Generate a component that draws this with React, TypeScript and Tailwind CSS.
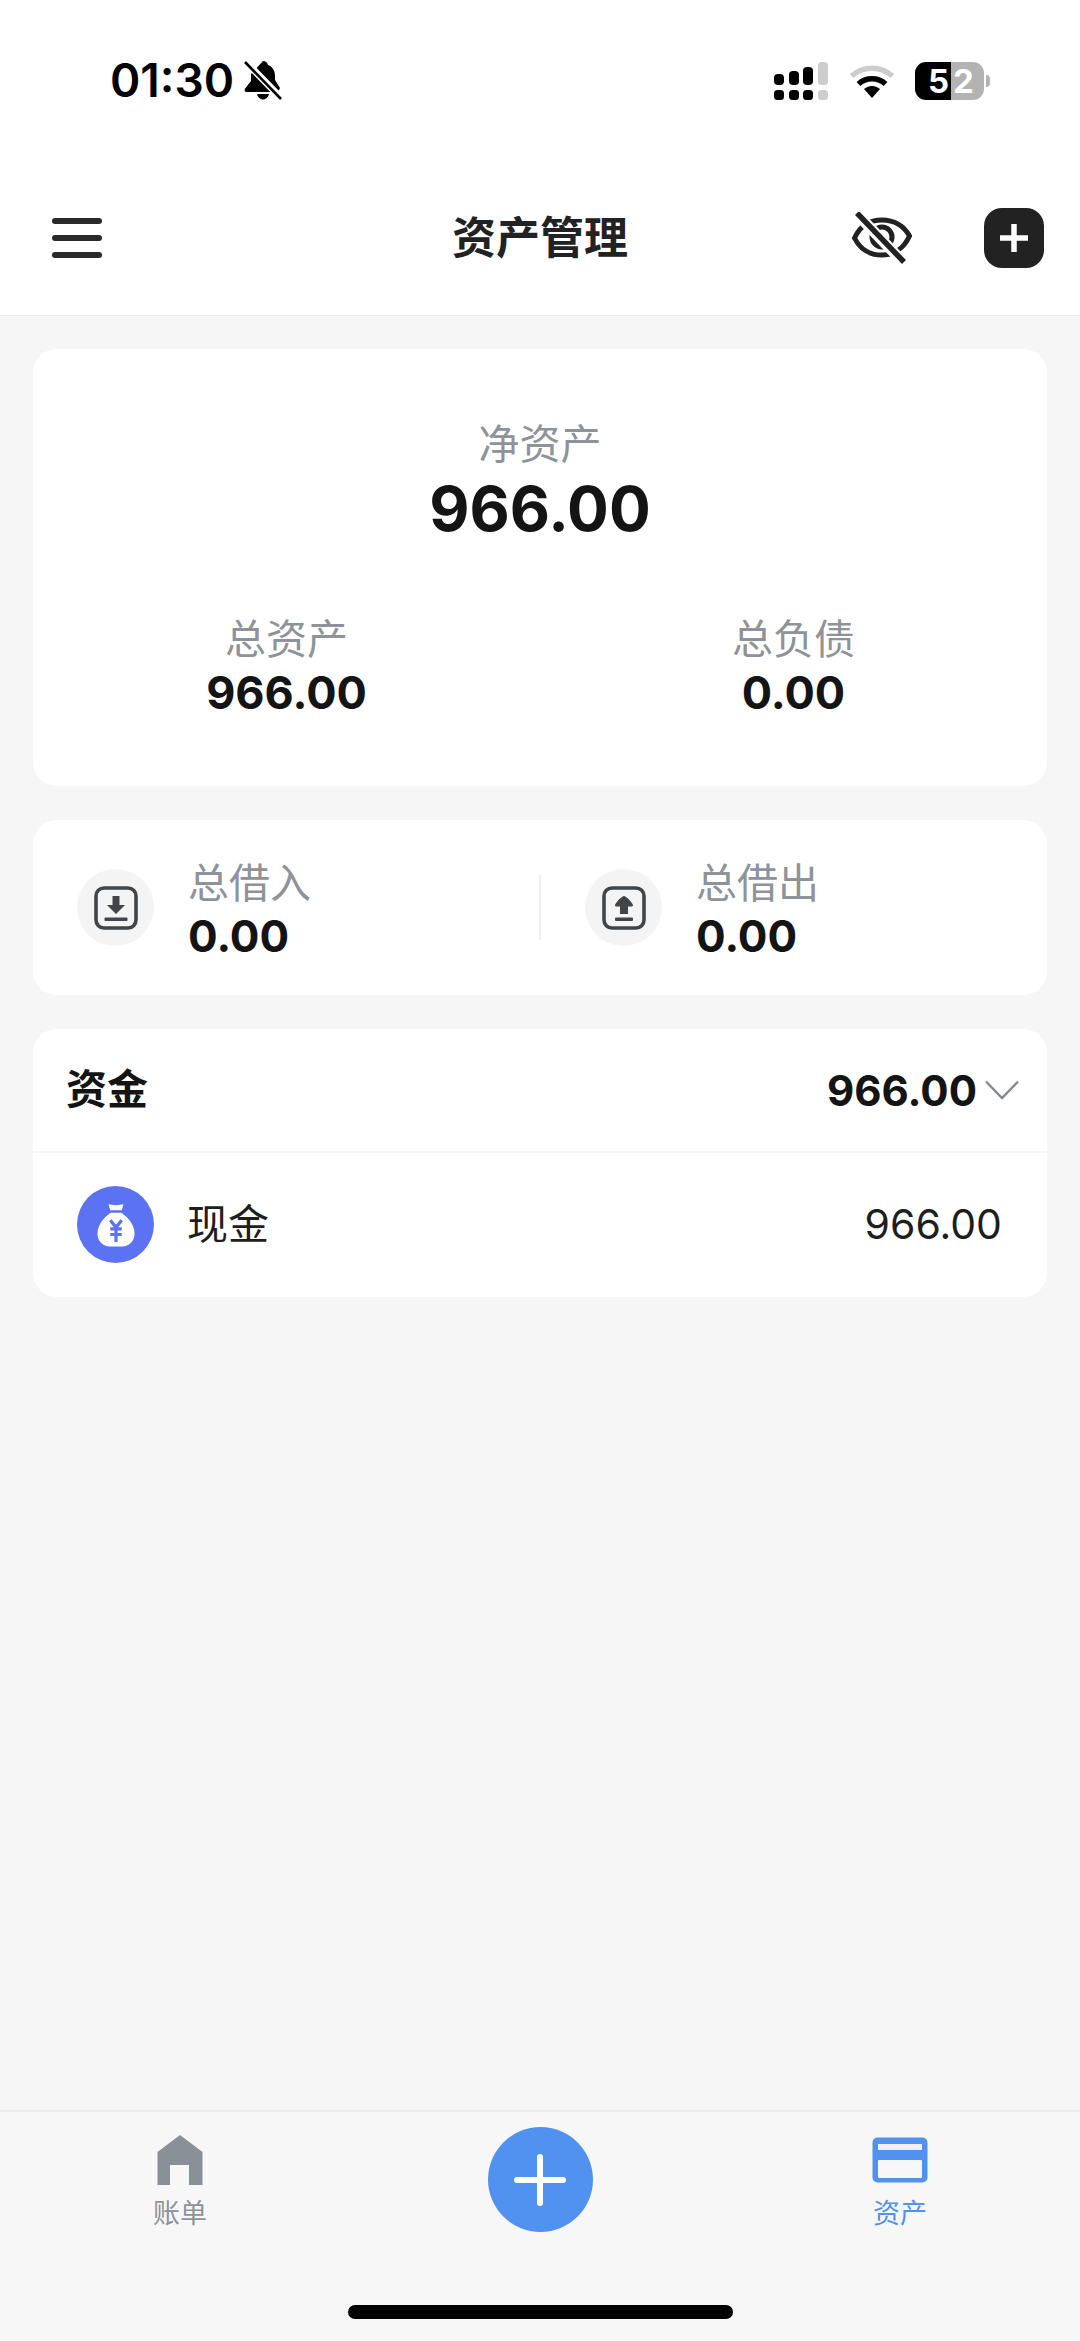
const font = { fontFamily: 'Inter, "Noto Sans CJK SC", sans-serif' };

function SignalIcon() {
  return (
    <svg width="54" height="38" viewBox="0 0 54 38" fill="#000">
      <rect x="0" y="12" width="10" height="11" rx="4" />
      <rect x="15" y="9" width="10" height="14" rx="4" />
      <rect x="29" y="5" width="10" height="18" rx="4" />
      <rect x="44" y="0" width="10" height="23" rx="3.5" fill="#cdcdcd" />
      <rect x="0" y="28" width="10" height="10" rx="3.5" />
      <rect x="15" y="28" width="10" height="10" rx="3.5" />
      <rect x="29" y="28" width="10" height="10" rx="3.5" />
      <rect x="44" y="28" width="10" height="10" rx="3.5" fill="#cdcdcd" />
    </svg>
  );
}

function WifiIcon() {
  return (
    <svg width="46" height="34" viewBox="0 0 46 34" fill="none">
      <path d="M2.5 12 C14 1.5 32 1.5 43.5 12" stroke="#cdcdcd" strokeWidth="5.5" />
      <path d="M9.5 20 C17 13 29 13 36.5 20" stroke="#000" strokeWidth="5.5" />
      <path d="M15 25 C20 21 26 21 31 25 L23 34 Z" fill="#000" />
    </svg>
  );
}

function BellOffIcon() {
  return (
    <svg width="38" height="40" viewBox="0 0 38 40" fill="#000">
      <path d="M19 1 C22 1 23.5 3 24 5 C29 7 31 11 31 16 L31 20 L36 28 L34 32 L3 32 C0.5 32 0 30 1.5 28 L7 21 L7 14 Z" />
      <path d="M13 34 L25 34 C24 38 21 39.5 19 39.5 C17 39.5 14 38 13 34 Z" />
      <path d="M3 3 L37 38" stroke="#fff" strokeWidth="7" />
      <path d="M1 2 L37 39" stroke="#000" strokeWidth="2.6" />
    </svg>
  );
}

function EyeOffIcon() {
  return (
    <svg width="60" height="52" viewBox="0 0 60 52" fill="none" stroke="#222" strokeWidth="5">
      <path d="M2.5 26 C8 14 18 8 30 8 C42 8 52 14 57.5 24 C52 36 42 43 30 43 C18 43 8 37 2.5 26 Z" />
      <circle cx="30" cy="25" r="10" />
      <path d="M5 2 L51 50" stroke="#fff" strokeWidth="11" />
      <path d="M5 1 L52 50" strokeWidth="5.5" />
    </svg>
  );
}

function DownloadBoxIcon() {
  return (
    <svg width="44" height="44" viewBox="0 0 44 44" fill="none">
      <rect x="2" y="2" width="40" height="40" rx="8" stroke="#424548" strokeWidth="3.6" />
      <path d="M18.5 10 H25.5 V19 H31 L22 28 L13 19 H18.5 Z" fill="#424548" />
      <rect x="10.5" y="31.5" width="23" height="3.4" rx="1" fill="#424548" />
    </svg>
  );
}

function UploadBoxIcon() {
  return (
    <svg width="44" height="44" viewBox="0 0 44 44" fill="none">
      <rect x="2" y="2" width="40" height="40" rx="8" stroke="#424548" strokeWidth="3.6" />
      <path d="M22 10 C24 10 31 17 31 19.5 C31 20.5 30 20.5 26 20.5 V28 H18 V20.5 C14 20.5 13 20.5 13 19.5 C13 17 20 10 22 10 Z" fill="#424548" />
      <rect x="13" y="31.5" width="18" height="3.4" rx="1" fill="#424548" />
    </svg>
  );
}

function MoneyBagIcon() {
  return (
    <svg width="38" height="44" viewBox="0 0 40 46">
      <path d="M12 1 C16 2.5 24 2.5 28 1 L26 7.5 L14 7.5 Z" fill="#fff" />
      <path d="M14.5 10 H25.5 C33 15 39.5 23 39.5 32 C39.5 41 33 45.5 27 45.5 H13 C7 45.5 0.5 41 0.5 32 C0.5 23 7 15 14.5 10 Z" fill="#fff" />
      <path d="M14 18 L20 25.5 L26 18 M14 27 H26 M14 33 H26 M20 25 V41" fill="none" stroke="#5b73f2" strokeWidth="3.4" />
    </svg>
  );
}

function HomeIcon() {
  return (
    <svg width="46" height="50" viewBox="0 0 46 50" fill="#8a9098">
      <path d="M23 0 L45.5 17 V50 H32 V30 H13 V50 H0.5 V17 Z" />
    </svg>
  );
}

function CardIcon() {
  return (
    <svg width="56" height="46" viewBox="0 0 56 46">
      <rect x="0.5" y="0.5" width="55" height="45" rx="5" fill="#5191f0" />
      <rect x="6" y="7" width="44" height="6" fill="#eef1f6" />
      <rect x="6" y="23" width="44" height="18" rx="1" fill="#f7f7f8" />
    </svg>
  );
}

function Stat({ label, value }: { label: string; value: string }) {
  return (
    <div className="flex flex-col items-center">
      <span className="text-[41px] leading-[48px] text-[#8e9299]">{label}</span>
      <span className="mt-[5px] text-[45px] leading-[50px] font-bold text-[#141414]">{value}</span>
    </div>
  );
}

function Loan({ label, icon }: { label: string; icon: React.ReactNode }) {
  return (
    <div className="flex flex-1 items-center pl-[44px]">
      <div className="flex h-[77px] w-[77px] items-center justify-center rounded-full bg-[#f4f4f5]">{icon}</div>
      <div className="ml-[34px] flex flex-col pt-[4px]">
        <span className="text-[41px] leading-[48px] text-[#8e9299]">{label}</span>
        <span className="mt-[4px] text-[44px] leading-[50px] font-bold text-[#141414]">0.00</span>
      </div>
    </div>
  );
}

export default function App() {
  return (
    <div style={font} className="flex h-[2341px] w-[1080px] flex-col overflow-hidden bg-[#f6f6f7]">
      <header className="h-[316px] shrink-0 border-b border-[#ececee] bg-white">
        <div className="flex h-[160px] items-start justify-between pt-[57px] pr-[90px] pl-[110px]">
          <div className="flex items-center gap-[10px]">
            <span className="text-[46px] leading-[46px] font-semibold text-black">01:30</span>
            <BellOffIcon />
          </div>
          <div className="flex items-center pt-[5px]">
            <SignalIcon />
            <div className="ml-[21px]"><WifiIcon /></div>
            <div className="ml-[20px] flex items-center">
              <div className="flex h-[38px] w-[69px] overflow-hidden rounded-[11px] text-[33px] leading-[38px] font-bold text-white">
                <div className="flex w-[36px] justify-end bg-black pr-[2px]">5</div>
                <div className="flex w-[33px] justify-start bg-[#b3b3b3] pl-[2px]">2</div>
              </div>
              <div className="ml-[2px] h-[12px] w-[4px] rounded-r-full bg-[#b3b3b3]" />
            </div>
          </div>
        </div>
        <div className="flex h-[155px] items-center px-[36px]">
          <div className="flex flex-1 flex-col gap-[11px]">
            <span className="ml-[16px] h-[6px] w-[50px] rounded-full bg-[#2a2a2a]" />
            <span className="ml-[16px] h-[6px] w-[50px] rounded-full bg-[#2a2a2a]" />
            <span className="ml-[16px] h-[6px] w-[50px] rounded-full bg-[#2a2a2a]" />
          </div>
          <h1 className="w-[176px] text-center text-[44px] leading-[56px] font-bold text-[#222]">资产管理</h1>
          <div className="flex flex-1 items-center justify-end gap-[72px]">
            <EyeOffIcon />
            <div className="flex h-[60px] w-[60px] items-center justify-center rounded-[18px] bg-[#222]">
              <svg width="30" height="30" viewBox="0 0 30 30" stroke="#fff" strokeWidth="5.5">
                <path d="M15 1 V29 M1 15 H29" />
              </svg>
            </div>
          </div>
        </div>
      </header>

      <main className="flex flex-1 flex-col gap-[34px] px-[33px] pt-[33px]">
        <section className="flex h-[437px] flex-col items-center rounded-[24px] bg-white pt-[68px]">
          <span className="text-[41px] leading-[54px] text-[#8e9299]">净资产</span>
          <span className="mt-[3px] text-[62px] leading-[70px] font-bold text-[#141414]">966.00</span>
          <div className="mt-[71px] flex w-full">
            <div className="w-[508px]"><Stat label="总资产" value="966.00" /></div>
            <div className="w-[508px]"><Stat label="总负债" value="0.00" /></div>
          </div>
        </section>

        <section className="flex h-[175px] items-center rounded-[24px] bg-white">
          <Loan label="总借入" icon={<DownloadBoxIcon />} />
          <div className="h-[65px] w-[2px] bg-[#eeeeef]" />
          <Loan label="总借出" icon={<UploadBoxIcon />} />
        </section>

        <section className="h-[268px] rounded-[24px] bg-white">
          <div className="flex h-[124px] items-center justify-between border-b-2 border-[#f6f6f7] pr-[28px] pl-[33px]">
            <span className="text-[41px] font-bold text-[#141414]">资金</span>
            <div className="flex items-center gap-[8px]">
              <span className="text-[42px] font-bold text-[#141414]">966.00</span>
              <svg width="34" height="20" viewBox="0 0 34 20" fill="none" stroke="#85898f" strokeWidth="2.4">
                <path d="M1 1.5 L17 18 L33 1.5" />
              </svg>
            </div>
          </div>
          <div className="flex h-[143px] items-center pr-[45px] pl-[44px]">
            <div className="flex h-[77px] w-[77px] items-center justify-center rounded-full bg-[#5b73f2]">
              <MoneyBagIcon />
            </div>
            <span className="ml-[33px] flex-1 text-[41px] text-[#1e1e1e]">现金</span>
            <span className="text-[41px] text-[#1e1e1e]">966.00</span>
          </div>
        </section>
      </main>

      <footer className="relative h-[231px] shrink-0 border-t-2 border-[#ebebed] bg-[#f7f7f8]">
        <div className="flex items-start justify-between pt-[15px]">
          <div className="ml-[72px] flex w-[216px] flex-col items-center pt-[8px]">
            <HomeIcon />
            <span className="mt-[11px] text-[27px] leading-[36px] text-[#8e9299]">账单</span>
          </div>
          <div className="flex h-[105px] w-[105px] items-center justify-center rounded-full bg-[#5191f0]">
            <svg width="52" height="52" viewBox="0 0 52 52" stroke="#fff" strokeWidth="6" strokeLinecap="round">
              <path d="M26 3 V49 M3 26 H49" />
            </svg>
          </div>
          <div className="mr-[72px] flex w-[216px] flex-col items-center pt-[10px]">
            <CardIcon />
            <span className="mt-[13px] text-[27px] leading-[36px] text-[#5191f0]">资产</span>
          </div>
        </div>
        <div className="absolute bottom-[22px] left-[348px] h-[14px] w-[385px] rounded-full bg-black" />
      </footer>
    </div>
  );
}
